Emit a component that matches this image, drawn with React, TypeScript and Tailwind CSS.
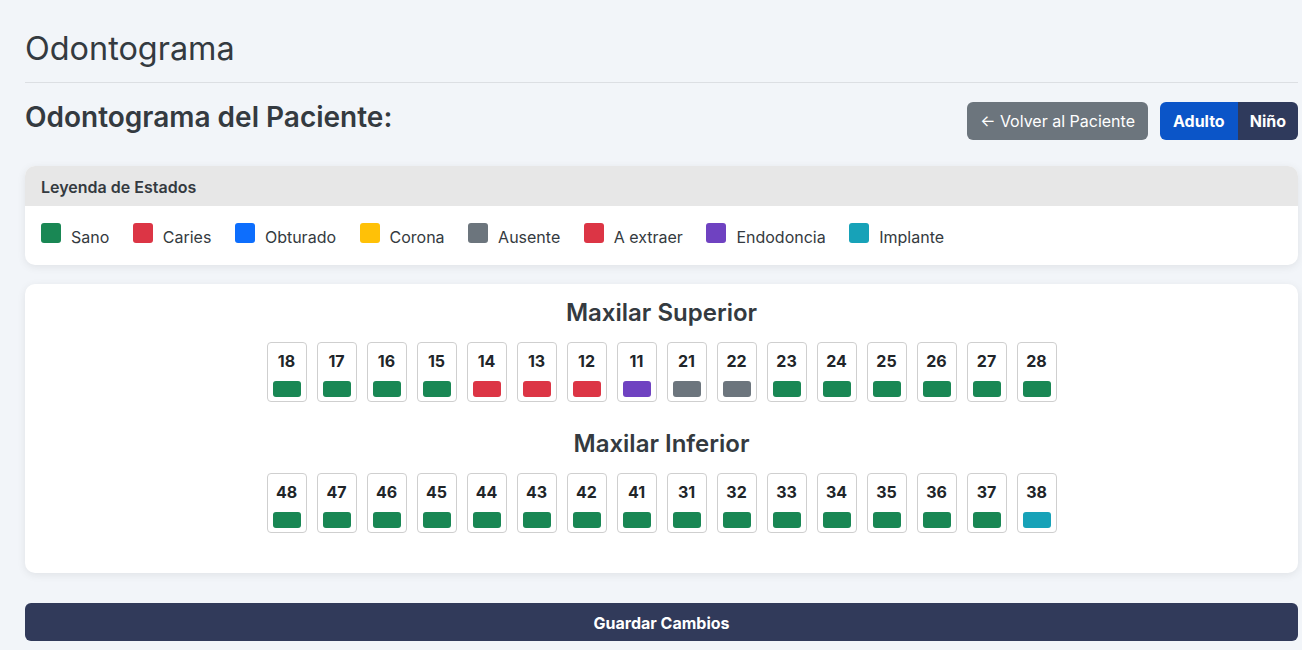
import React from "react";

const legend = [
  { label: "Sano", color: "bg-[#198754]" },
  { label: "Caries", color: "bg-[#dc3545]" },
  { label: "Obturado", color: "bg-[#0d6efd]" },
  { label: "Corona", color: "bg-[#ffc107]" },
  { label: "Ausente", color: "bg-[#6c757d]" },
  { label: "A extraer", color: "bg-[#dc3545]" },
  { label: "Endodoncia", color: "bg-[#6f42c1]" },
  { label: "Implante", color: "bg-[#17a2b8]" },
];

const G = "bg-[#198754]";
const R = "bg-[#dc3545]";
const P = "bg-[#6f42c1]";
const A = "bg-[#6c757d]";
const T = "bg-[#17a2b8]";

const upper: [string, string][] = [
  ["18", G], ["17", G], ["16", G], ["15", G], ["14", R], ["13", R], ["12", R], ["11", P],
  ["21", A], ["22", A], ["23", G], ["24", G], ["25", G], ["26", G], ["27", G], ["28", G],
];
const lower: [string, string][] = [
  ["48", G], ["47", G], ["46", G], ["45", G], ["44", G], ["43", G], ["42", G], ["41", G],
  ["31", G], ["32", G], ["33", G], ["34", G], ["35", G], ["36", G], ["37", G], ["38", T],
];

function Tooth({ n, c }: { n: string; c: string }) {
  return (
    <div className="flex h-[60px] w-[40px] flex-col items-center rounded-[4px] border border-[#cfcfcf] bg-white pt-[8px]">
      <span className="text-[16px] font-bold leading-[20px] text-[#212529]">{n}</span>
      <span className={`mt-[10px] h-[16px] w-[28px] rounded-[3px] ${c}`} />
    </div>
  );
}

export default function App() {
  return (
    <div
      className="min-h-[650px] bg-[#f2f5f9] pl-[25px] pr-[4px] pt-[28px] text-[#343a40]"
      style={{ fontFamily: "Inter, 'Noto Sans', sans-serif" }}
    >
      <h1 className="text-[32.4px] font-normal leading-[42px] text-[#343a40]">Odontograma</h1>
      <div className="mt-[12px] h-px bg-[#dcdfe3]" />
      <div className="mt-[18px] flex items-start justify-between">
        <h2 className="text-[28px] font-semibold leading-[32px] text-[#343a40]">
          Odontograma del Paciente:
        </h2>
        <div className="mt-[1px] flex items-center gap-[12px]">
          <button className="h-[38px] rounded-[6px] bg-[#6c757d] px-[13px] text-[16px] text-white">
            ← Volver al Paciente
          </button>
          <div className="flex h-[38px] overflow-hidden rounded-[6px]">
            <button className="bg-[#0b55c8] px-[13px] text-[16px] font-bold text-white">Adulto</button>
            <button className="bg-[#2f3a5c] px-[12px] text-[16px] font-bold text-white">Niño</button>
          </div>
        </div>
      </div>

      <div className="mt-[26px] overflow-hidden rounded-[10px] bg-white shadow-[0_2px_8px_rgba(0,0,0,0.08)]">
        <div className="flex h-[40px] items-center bg-[#e7e7e7] px-[16px] pt-[1px] text-[16px] font-semibold text-[#343a40]">
          Leyenda de Estados
        </div>
        <div className="flex h-[59px] items-start gap-[23.5px] px-[16px] pt-[17px]">
          {legend.map((l) => (
            <div key={l.label} className="flex items-start">
              <span className={`h-[20px] w-[20px] rounded-[3px] ${l.color}`} />
              <span className="ml-[10px] mt-[2px] text-[16px] leading-[24px] text-[#343a40]">{l.label}</span>
            </div>
          ))}
        </div>
      </div>

      <div className="mt-[19px] flex h-[289px] flex-col items-center rounded-[10px] bg-white pt-[14px] shadow-[0_2px_8px_rgba(0,0,0,0.08)]">
        <h3 className="text-[24px] font-semibold leading-[30px] text-[#343a40]">Maxilar Superior</h3>
        <div className="mt-[14px] flex gap-[10px]">
          {upper.map(([n, c]) => (
            <Tooth key={n} n={n} c={c} />
          ))}
        </div>
        <h3 className="mt-[27px] text-[24px] font-semibold leading-[30px] text-[#343a40]">Maxilar Inferior</h3>
        <div className="mt-[14px] flex gap-[10px]">
          {lower.map(([n, c]) => (
            <Tooth key={n} n={n} c={c} />
          ))}
        </div>
      </div>

      <button className="mt-[30px] flex h-[38px] w-full items-center justify-center rounded-[6px] bg-[#313a5a] pt-[1px] text-[16px] font-bold text-white">
        Guardar Cambios
      </button>
      <div className="h-[20px]" />
    </div>
  );
}
